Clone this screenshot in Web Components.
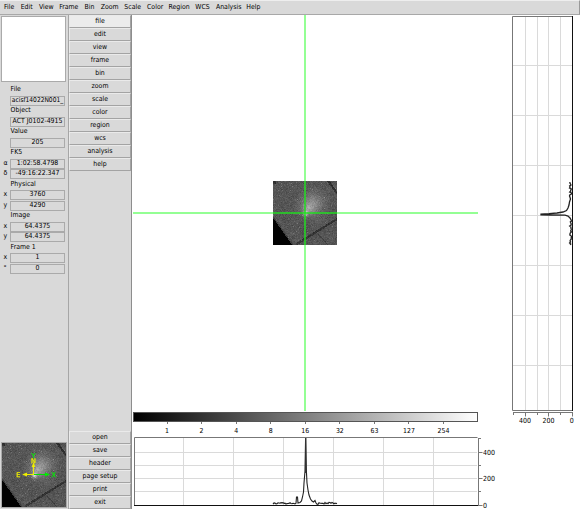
<!DOCTYPE html>
<html lang="en"><head><meta charset="utf-8"><title>SAOImage ds9</title>
<style>html,body{margin:0;background:#fff}body{width:580px;height:509px;overflow:hidden;font:6.9px/8px "DejaVu Sans Condensed","DejaVu Sans",sans-serif;font-stretch:condensed;color:#000}</style></head>
<body><ds-app></ds-app>
<script>
const define=(name,html,init)=>customElements.define(name,class extends HTMLElement{
  connectedCallback(){
    if(this.shadowRoot)return;
    this.attachShadow({mode:'open'}).innerHTML=typeof html==='function'?html(this):html;
    if(init)init(this.shadowRoot,this);
  }
});

define('ds-menubar',`<style>:host{display:flex;gap:0;height:15px;box-sizing:border-box;background:#d9d9d9;border-top:1px solid #eee;border-bottom:1px solid #a8a8a8;padding-left:4px;border-right:1px solid #999}
span{flex:none;line-height:13px;white-space:nowrap}</style>`+
[['File',16.7],['Edit',18.2],['View',20.3],['Frame',25.4],['Bin',16.2],['Zoom',23.6],['Scale',22.7],['Color',21.5],['Region',26.8],['WCS',20.6],['Analysis',30.4],['Help',20]].map(m=>`<span style="width:${m[1]}px">${m[0]}</span>`).join(''));

define('ds-button',`<style>:host{display:block;height:13px;box-sizing:border-box;background:#d9d9d9;border:1px solid;border-color:#eaeaea #a3a3a3 #a3a3a3 #eaeaea;text-align:center;line-height:11px}:host([active]){background:#ececec}</style><slot></slot>`);

define('ds-buttonbar',`<style>:host{display:flex;flex-direction:column;justify-content:space-between;width:64px;box-sizing:border-box;background:#d9d9d9;border-left:1px solid #a6a6a6;border-right:1px solid #8d8d8d}</style>
<div>${'file edit view frame bin zoom scale color region wcs analysis help'.split(' ').map((b,i)=>`<ds-button${i?'':' active'}>${b}</ds-button>`).join('')}</div>
<div>${['open','save','header','page setup','print','exit'].map(b=>`<ds-button>${b}</ds-button>`).join('')}</div>`);

define('ds-field',e=>`<style>:host{display:grid;grid-template-columns:9px 55px;height:10.5px}i{font-style:normal;padding-left:2.5px;line-height:8.4px}
b{font-weight:400;box-sizing:border-box;height:10px;border:1px solid #aaa;display:flex;justify-content:center;line-height:7.6px;overflow:hidden;white-space:nowrap}</style><i>${e.getAttribute('label')||''}</i><b><slot></slot></b>`);

define('ds-heading',`<style>:host{display:block;height:10.5px;line-height:9.6px;padding-left:9.6px}</style><slot></slot>`);

define('ds-info',`<style>:host{display:flex;flex-direction:column;width:68px;box-sizing:border-box;background:#d9d9d9;padding:1px 0 0 1px}
.mag{width:65px;height:66px;box-sizing:border-box;background:#fff;border:1px solid #aaa}
.f{padding-top:3px;flex:1}
.pan{display:block;width:66px;height:66px;box-sizing:border-box;border:1px solid #aaa;margin-bottom:1px}</style>
<div class="mag"></div><div class="f">
<ds-heading>File</ds-heading><ds-field style="font-size:6.6px">acisf14022N001_</ds-field>
<ds-heading>Object</ds-heading><ds-field>ACT J0102-4915</ds-field>
<ds-heading>Value</ds-heading><ds-field>205</ds-field>
<ds-heading>FK5</ds-heading><ds-field label="α">1:02:58.4798</ds-field><ds-field label="δ">-49:16:22.347</ds-field>
<ds-heading>Physical</ds-heading><ds-field label="x">3760</ds-field><ds-field label="y">4290</ds-field>
<ds-heading>Image</ds-heading><ds-field label="x">64.4375</ds-field><ds-field label="y">64.4375</ds-field>
<ds-heading>Frame 1</ds-heading><ds-field label="x">1</ds-field><ds-field label="°">0</ds-field></div>
<ds-panner class="pan"></ds-panner>`);

define('ds-sky','<style>:host{display:block;width:64px;height:64px}canvas{display:block;width:100%;height:100%;image-rendering:pixelated}</style><canvas width="64" height="64"></canvas>',r=>{
  const g=r.querySelector('canvas').getContext('2d'),d=g.createImageData(64,64);
  let s=14022;const rnd=()=>((s=(s*1664525+1013904223)>>>0)/4294967296);
  for(let y=0;y<64;y++)for(let x=0;x<64;x++){
    let v=85+(rnd()+rnd()+rnd()-1.5)*14;
    if(rnd()>.988)v+=32;
    v+=55*Math.exp(-((x-39)**2+(y-22)**2)/120)+42*Math.exp(-((x-34)**2+(y-28)**2)/35)+85*Math.exp(-((x-32)**2+(y-32)**2)/5);
    if(x>22&&Math.abs(y-(62-(x-24)*.62))<1.3)v-=32;
    if(x>53&&Math.abs(x-55-y*.72)<1.3)v-=36;
    if(x>42&&y>50&&Math.abs(y-(51+(x-43)*1.1))<.9)v-=18;
    if(x<3&&y<3)v-=35;
    const edge=y-(37+x*1.42);
    if(edge>0)v=2;else if(edge>-2)v*=.75;
    const i=(y*64+x)*4;d.data[i]=d.data[i+1]=d.data[i+2]=v;d.data[i+3]=255;
  }
  g.putImageData(d,0,0);
});

define('ds-panner',`<style>:host{position:relative}svg{position:absolute;inset:0;font:6.5px "DejaVu Sans",sans-serif}</style><ds-sky></ds-sky>
<svg width="64" height="64" viewBox="0 0 64 64"><path d="M32 31.5H44" fill="none" stroke="#00e000"/><path d="M48 31.5l-5-2v4z" fill="#0e0"/>
<path d="M31.5 32V22M32 31.5H23" stroke="#ee0" fill="none"/><path d="M20 31.5l5-2v4zM31.5 19l-1.8 5h3.6z" fill="#ee0"/>
<g stroke-width=".25"><text x="49.6" y="34" fill="#0e0" stroke="#0e0">X</text><text x="29.4" y="14.6" fill="#0e0" stroke="#0e0">Y</text><text x="29" y="19.5" fill="#ee0" stroke="#ee0">N</text><text x="14.3" y="34" fill="#ee0" stroke="#ee0">E</text></g></svg>`);

define('ds-frame',`<style>:host{display:block;box-sizing:border-box;width:346px;height:396px;position:relative;background:#fff;padding:166px 0 0 141px}
i{position:absolute;--a:rgba(0,255,0,.42);--b:rgba(30,225,30,.72)}
.v{left:172px;top:0;width:2px;height:396px;background:linear-gradient(var(--a) 166px,var(--b) 166px 230px,var(--a) 230px)}
.h{top:197px;left:1px;width:345px;height:2px;background:linear-gradient(90deg,var(--a) 140px,var(--b) 140px 204px,var(--a) 204px)}</style>
<ds-sky></ds-sky><i class="v"></i><i class="h"></i>`);

define('ds-colorbar',`<style>:host{display:block;width:346px;height:25px}
.bar{height:10px;box-sizing:border-box;border:1px solid #555;background:linear-gradient(90deg,#000,#fff);margin-left:1px}
.l{display:flex;padding:0 34px 0 34.5px;justify-content:space-between}
span{width:1px;display:flex;flex-direction:column;align-items:center;white-space:nowrap}span::before{content:"";width:1px;height:2px;background:#777;margin-bottom:2.5px}</style><div class="bar"></div><div class="l">${[1,2,4,8,16,32,63,127,254].map(n=>`<span>${n}</span>`).join('')}</div>`);

/* Low-level background counts on either side of the source peak. */
let q=77;
const base=(a,b,f)=>{let p='';for(let i=a;i<=b;i++){q=(q*73+41)%101;p+=' '+f(i,q/101)}return p};
const hRow=(x,n)=>`${x} ${(67.3-n*1.9).toFixed(1)}`;
const vRow=(y,n)=>`${(61.6-n*2.2).toFixed(1)} ${y}`;
const hpath='M'+(base(141,164,hRow)+' 164.5 60 165.5 60 166 66 168 65.5 169.5 64 170.5 60 171.5 55 172 46 173 34 173.6 1 174.4 34 175 46 176 53 177 58 178.5 62 180 64 181.5 65 183 63.5 184 66'+base(185,205,hRow)).trim();
const vpath='M'+(base(167,182,vRow)+' 60.5 184 59.5 187 59 190 58 193 56.5 195.5 53 197 47 198 39 198.6 31 199 31 199.8 41 200 55 200.2 58 201 60 203'+base(205,230,vRow)).trim();

define('ds-hplot',`<style>:host{display:block;height:72px}svg{display:block}text{font-size:7px}</style>
<svg width="370" height="72"><path d="M51.5 1V68M101.5 1V68M151.5 1V68M201.5 1V68M251.5 1V68M301.5 1V68M2 15.5H345M2 28.5H345M2 41.5H345M2 54.5H345" stroke="#dadada" fill="none"/>
<path d="M2.5 68V.5H345.5" fill="none" stroke="#777"/><path d="M2 68.5H346" stroke="#111"/><path d="M346.5 1V68M346 1.5h3M346 15.5h4.5M346 28.5h3M346 41.5h4.5M346 54.5h3M346 68.5h4.5" fill="none" stroke="#777"/>
<path d="${hpath}" fill="none" stroke="#222" stroke-width="1.1"/><path d="M173.7 1V36" stroke="#333" stroke-width="1.3"/>
<text x="351" y="17.5">400</text><text x="351" y="44">200</text><text x="351" y="70.5">0</text></svg>`);

define('ds-vplot',`<style>:host{display:block;width:70px;height:409px}svg{display:block}text{font-size:7px;text-anchor:middle}</style>
<svg width="70" height="409"><path d="M15.5 2V395M27.5 2V395M38.5 2V395M50.5 2V395M3 50.5H62M3 100.5H62M3 150.5H62M3 200.5H62M3 250.5H62M3 300.5H62M3 350.5H62" stroke="#dadada" fill="none"/>
<path d="M62 1.5H2.5V395.5H62" fill="none" stroke="#777"/><path d="M62.5 1V396" stroke="#111"/><path d="M3 397.5H63M3.5 397v3M15.5 397v4.5M27.5 397v3M38.5 397v4.5M50.5 397v3M62.5 397v4.5" stroke="#777" fill="none"/>
<path d="${vpath}" fill="none" stroke="#222" stroke-width="1.3"/>
<text x="15" y="408">400</text><text x="38.5" y="408">200</text><text x="61.8" y="408">0</text></svg>`);

define('ds-app',`<style>:host{display:flex;flex-direction:column;width:580px;height:509px;background:#fff}
.body{display:flex;height:494px}.left{display:flex;flex-direction:column;width:378px}.cb{margin-top:1px}</style>
<ds-menubar></ds-menubar><div class="body"><ds-info></ds-info><ds-buttonbar></ds-buttonbar><div class="left"><ds-frame></ds-frame><ds-colorbar class="cb"></ds-colorbar><ds-hplot></ds-hplot></div><ds-vplot></ds-vplot></div>`);
</script></body></html>
